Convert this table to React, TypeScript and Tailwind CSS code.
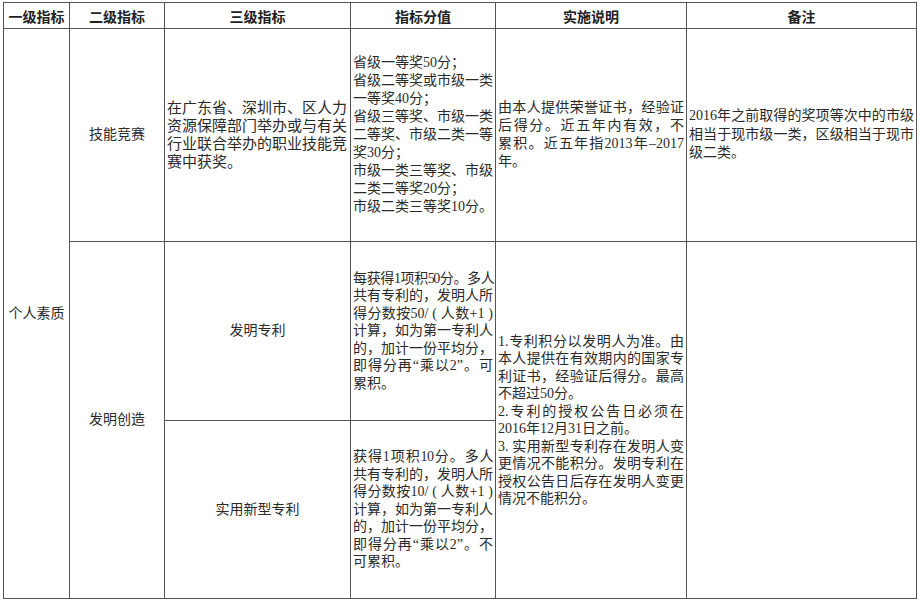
import React from "react";

type Line = { t: string; j?: boolean; k?: string };

const body = "font-['Liberation_Serif','Noto_Sans_CJK_SC',serif]";
const head = "font-['Noto_Sans_CJK_SC',sans-serif]";

function Lines({ lines, className = "" }: { lines: Line[]; className?: string }) {
  return (
    <div className={className}>
      {lines.map((l, i) => (
        <div
          key={i}
          className={`whitespace-nowrap ${l.k ?? ""} ${l.j ? "text-justify [text-align-last:justify]" : "text-left"}`}
        >
          {l.t}
        </div>
      ))}
    </div>
  );
}

const skillDesc: Line[] = [
  { t: "在广东省、深圳市、区人力", j: true },
  { t: "资源保障部门举办或与有关", j: true },
  { t: "行业联合举办的职业技能竞", j: true },
  { t: "赛中获奖。" },
];

const skillScore: Line[] = [
  { t: "省级一等奖50分；" },
  { t: "省级二等奖或市级一类", j: true },
  { t: "一等奖40分；" },
  { t: "省级三等奖、市级一类", j: true },
  { t: "二等奖、市级二类一等", j: true },
  { t: "奖30分；" },
  { t: "市级一类三等奖、市级", j: true },
  { t: "二类二等奖20分；" },
  { t: "市级二类三等奖10分。" },
];

const skillNote: Line[] = [
  { t: "由本人提供荣誉证书，经验证", j: true },
  { t: "后得分。近五年内有效，不", j: true },
  { t: "累积。近五年指2013年–2017", j: true },
  { t: "年。" },
];

const skillRemark: Line[] = [
  { t: "2016年之前取得的奖项等次中的市级", j: true },
  { t: "相当于现市级一类，区级相当于现市", j: true },
  { t: "级二类。" },
];

const inventScore: Line[] = [
  { t: "每获得1项积50分。多人", j: true, k: "tracking-[-1.7px]" },
  { t: "共有专利的，发明人所", j: true },
  { t: "得分数按50/ ( 人数+1 )", j: true },
  { t: "计算，如为第一专利人", j: true },
  { t: "的，加计一份平均分，", j: true },
  { t: "即得分再“乘以2”。可", j: true },
  { t: "累积。" },
];

const utilityScore: Line[] = [
  { t: "获得1项积10分。多人", j: true, k: "tracking-[-0.6px]" },
  { t: "共有专利的，发明人所", j: true },
  { t: "得分数按10/ ( 人数+1 )", j: true },
  { t: "计算，如为第一专利人", j: true },
  { t: "的，加计一份平均分，", j: true },
  { t: "即得分再“乘以2”。不", j: true },
  { t: "可累积。" },
];

const patentNote: Line[] = [
  { t: "1.专利积分以发明人为准。由", j: true },
  { t: "本人提供在有效期内的国家专", j: true },
  { t: "利证书，经验证后得分。最高", j: true },
  { t: "不超过50分。" },
  { t: "2.专利的授权公告日必须在", j: true },
  { t: "2016年12月31日之前。" },
  { t: "3. 实用新型专利存在发明人变", j: true },
  { t: "更情况不能积分。发明专利在", j: true },
  { t: "授权公告日后存在发明人变更", j: true },
  { t: "情况不能积分。" },
];

const headers = ["一级指标", "二级指标", "三级指标", "指标分值", "实施说明", "备注"];

export default function App() {
  const cell = "border border-[#555] align-middle";
  return (
    <div className="w-[919px] h-[601px] bg-white overflow-hidden pl-[3px] pt-[2px]">
      <table className={`table-fixed border-collapse w-[913px] text-[#2a2a2a] ${body}`}>
        <colgroup>
          <col className="w-[66px]" />
          <col className="w-[95px]" />
          <col className="w-[186px]" />
          <col className="w-[145px]" />
          <col className="w-[191px]" />
          <col className="w-[230px]" />
        </colgroup>
        <thead>
          <tr className="h-[26px]">
            {headers.map((h) => (
              <th
                key={h}
                className={`${cell} ${head} text-center text-[14px] leading-none font-bold text-[#222] p-0`}
              >
                {h}
              </th>
            ))}
          </tr>
        </thead>
        <tbody className="text-[14px] leading-[18px]">
          <tr className="h-[213px]">
            <td rowSpan={3} className={`${cell} text-center text-[14px]`}>
              个人素质
            </td>
            <td className={`${cell} text-center`}>技能竞赛</td>
            <td className={`${cell} pl-[2px] pr-[3px]`}>
              <Lines lines={skillDesc} className="text-[15px] leading-[18px]" />
            </td>
            <td className={`${cell} pl-[2px] pr-[2px]`}>
              <Lines lines={skillScore} className="leading-[18px]" />
            </td>
            <td className={`${cell} pl-[2px] pr-[2px]`}>
              <Lines lines={skillNote} />
            </td>
            <td className={`${cell} pl-[2px] pr-[2px]`}>
              <Lines lines={skillRemark} className="leading-[18.5px]" />
            </td>
          </tr>
          <tr className="h-[179px]">
            <td rowSpan={2} className={`${cell} text-center`}>
              发明创造
            </td>
            <td className={`${cell} text-center`}>发明专利</td>
            <td className={`${cell} pl-[2px] pr-[2px]`}>
              <Lines lines={inventScore} className="leading-[17.5px]" />
            </td>
            <td rowSpan={2} className={`${cell} pl-[2px] pr-[2px]`}>
              <Lines lines={patentNote} className="leading-[17.5px]" />
            </td>
            <td rowSpan={2} className={cell}></td>
          </tr>
          <tr className="h-[178px]">
            <td className={`${cell} text-center`}>实用新型专利</td>
            <td className={`${cell} pl-[2px] pr-[2px]`}>
              <Lines lines={utilityScore} className="leading-[17.5px]" />
            </td>
          </tr>
        </tbody>
      </table>
    </div>
  );
}
